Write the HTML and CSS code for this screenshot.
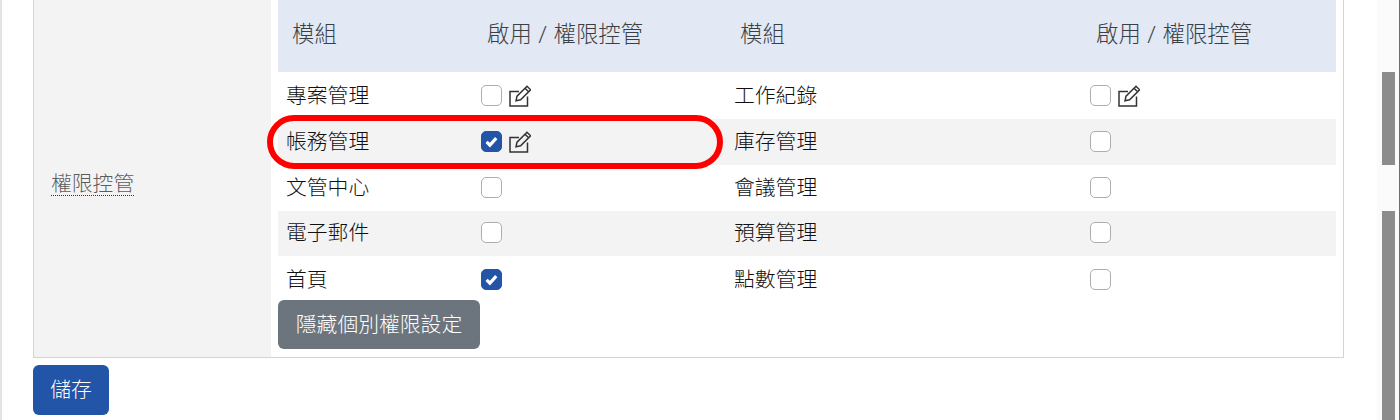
FILE: index.html
```html
<!DOCTYPE html>
<html lang="zh-Hant">
  <head>
    <meta charset="UTF-8" />
    <title>權限控管</title>
    <link rel="stylesheet" href="styles.css">
  </head>
  <body>
    <div class="page">
      <main class="content">
        <div class="card">
          <div class="side"><span class="side-label">權限控管</span></div>
          <div class="main">
            <table class="perm-table">
              <colgroup>
                <col class="col-a"><col class="col-b"><col class="col-c"><col class="col-d">
              </colgroup>
              <thead>
                <tr>
                  <th>模組</th>
                  <th>啟用 / 權限控管</th>
                  <th>模組</th>
                  <th>啟用 / 權限控管</th>
                </tr>
              </thead>
              <tbody>
                <tr class="r1">
                  <td>專案管理</td>
                  <td><span class="check"></span><svg class="edit" viewBox="0 0 22 22"><use href="#pen"/></svg></td>
                  <td>工作紀錄</td>
                  <td><span class="check"></span><svg class="edit" viewBox="0 0 22 22"><use href="#pen"/></svg></td>
                </tr>
                <tr class="r2">
                  <td>帳務管理</td>
                  <td><span class="check on"><svg viewBox="0 0 12 12"><path d="M2.9 6.2l2.1 2.1 4-4.4" /></svg></span><svg class="edit" viewBox="0 0 22 22"><use href="#pen"/></svg></td>
                  <td>庫存管理</td>
                  <td><span class="check"></span></td>
                </tr>
                <tr class="r3">
                  <td>文管中心</td>
                  <td><span class="check"></span></td>
                  <td>會議管理</td>
                  <td><span class="check"></span></td>
                </tr>
                <tr class="r4">
                  <td>電子郵件</td>
                  <td><span class="check"></span></td>
                  <td>預算管理</td>
                  <td><span class="check"></span></td>
                </tr>
                <tr class="r5">
                  <td>首頁</td>
                  <td><span class="check on"><svg viewBox="0 0 12 12"><path d="M2.9 6.2l2.1 2.1 4-4.4" /></svg></span></td>
                  <td>點數管理</td>
                  <td><span class="check"></span></td>
                </tr>
              </tbody>
            </table>
            <button class="btn btn-gray">隱藏個別權限設定</button>
          </div>
        </div>
        <button class="btn btn-blue">儲存</button>
      </main>
      <div class="scrollbar">
        <div class="thumb thumb-top"></div>
        <div class="thumb thumb-bottom"></div>
      </div>
    </div>
    <div class="highlight"></div>

    <svg class="defs" width="0" height="0">
      <symbol id="pen" viewBox="0 0 22 22">
        <path d="M10 6.5H1V21H18.5V11.5"/>
        <path d="M7 15.8l1-4.6 10-10 3.6 3.6-10 10zM16 3.2l3.6 3.6"/>
      </symbol>
    </svg>
  </body>
</html>
```

FILE: styles.css
```css
*,
*::before,
*::after {
  box-sizing: border-box;
}

html,
body {
  height: 100%;
  margin: 0;
  overflow: hidden;
}

body {
  position: relative;
  background-color: #fff;
  color: #212529;
  font-family: Roboto, "Noto Sans CJK TC", sans-serif;
  font-size: 20.8px;
  font-weight: 300;
}

.page {
  display: flex;
  height: 420px;
  border-left: 2px solid #e4e4e4;
  border-right: 1px solid #6e6e6e;
}

.content {
  flex: 1;
  padding-left: 31px;
  padding-right: 33px;
}

.card {
  display: flex;
  height: 358px;
  border: 1px solid #d4d4d4;
  border-top: 0;
}

.side {
  display: flex;
  align-items: flex-end;
  width: 237px;
  padding: 0 0 161px 17px;
  background-color: #f3f3f3;
}

.side-label {
  color: #5c5c5c;
  line-height: 22px;
  border-bottom: 1px dotted #333;
}

.main {
  flex: 1;
  padding: 0 7px;
}

.perm-table {
  width: 100%;
  table-layout: fixed;
  border-collapse: collapse;
}

.col-a { width: 195px; }
.col-b { width: 253px; }
.col-c { width: 356px; }

.perm-table th {
  height: 72px;
  padding: 0 0 9px 14px;
  background-color: #e2e8f4;
  color: #3a3f44;
  font-size: 22.4px;
  font-weight: 300;
  text-align: left;
  word-spacing: 1px;
}

.perm-table td {
  padding: 0 0 0 8px;
  color: #111;
  vertical-align: middle;
}

.perm-table td:nth-child(odd) {
  padding-bottom: 4px;
}

.perm-table td:nth-child(even) {
  font-size: 0;
}

.r1 { height: 47px; }
.r2 { height: 46px; }
.r3 { height: 46px; }
.r4 { height: 45px; }
.r5 { height: 44px; }

.perm-table .r2 td:nth-child(even),
.perm-table .r3 td:nth-child(even) {
  padding-bottom: 1px;
}

.perm-table .r4 td:nth-child(odd) {
  padding-bottom: 5px;
}

.perm-table .r4 td:nth-child(even) {
  padding-bottom: 2px;
}

.perm-table .r5 td:nth-child(odd) {
  padding-bottom: 1px;
}

.perm-table .r5 td:nth-child(even) {
  padding-top: 2px;
}

.r2 td,
.r4 td {
  background-color: #f3f3f3;
}

.check {
  display: inline-block;
  width: 21px;
  height: 21px;
  background-color: #fff;
  border: 1px solid #aeaeae;
  border-radius: 5px;
  vertical-align: middle;
}

.check.on {
  background-color: #2254a8;
  border-color: #2254a8;
}

.check svg {
  display: block;
  width: 100%;
  height: 100%;
  fill: none;
  stroke: #fff;
  stroke-width: 2;
}

.edit {
  width: 22px;
  height: 22px;
  margin-left: 7px;
  fill: none;
  stroke: #333;
  stroke-width: 1.5;
  vertical-align: middle;
}

.btn {
  display: block;
  padding: 0 0 4px;
  border: 0;
  border-radius: 6px;
  color: #fff;
  font-family: inherit;
  font-size: 20.8px;
  font-weight: 300;
}

.btn-gray {
  width: 202px;
  height: 49px;
  background-color: #6c757d;
}

.btn-blue {
  width: 76px;
  height: 50px;
  margin-top: 7px;
  background-color: #2254a8;
}

.scrollbar {
  display: flex;
  flex-direction: column;
  width: 22px;
  padding: 72px 4px 0 5px;
  background-color: #fbfbfb;
}

.thumb {
  background-color: #8c8c8c;
}

.thumb-top {
  height: 93px;
}

.thumb-bottom {
  flex: 1;
  margin-top: 46px;
}

/* red marker drawn over the screenshot */
.highlight {
  position: absolute;
  left: 267px;
  top: 115px;
  width: 456px;
  height: 54px;
  border: 6px solid #f00;
  border-radius: 27px;
}

.defs {
  position: absolute;
}
```
